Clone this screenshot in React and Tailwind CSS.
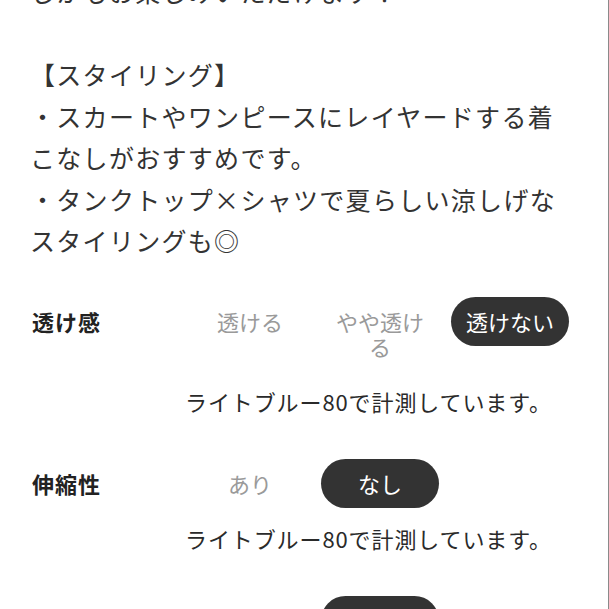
import React from "react";

const FONT = {
  fontFamily: '"Noto Sans CJK JP", "Noto Sans", sans-serif',
};

const bodyLines = [
  "しかもお楽しみいただけます！",
  "",
  "【スタイリング】",
  "・スカートやワンピースにレイヤードする着",
  "こなしがおすすめです。",
  "・タンクトップ×シャツで夏らしい涼しげな",
  "スタイリングも◎",
];

const specs = [
  {
    label: "透け感",
    options: ["透ける", "やや透ける", "透けない"],
    selected: 2,
    note: "ライトブルー80で計測しています。",
  },
  {
    label: "伸縮性",
    options: ["あり", "なし"],
    selected: 1,
    note: "ライトブルー80で計測しています。",
  },
  {
    label: "生地の厚さ",
    options: ["薄手", "普通", "厚手"],
    selected: 1,
    note: "ライトブルー80で計測しています。",
  },
];

function SpecRow({ spec }) {
  return (
    <div className="flex flex-col">
      <div className="flex items-start">
        <div className="w-[155px] shrink-0 pl-[2px] py-3 text-[22px] leading-[25px] font-bold tracking-[1px] text-[#222]">
          {spec.label}
        </div>
        <div className="flex">
          {spec.options.map((opt, i) => (
            <div key={opt} className="w-[130px] flex justify-center">
              {i === spec.selected ? (
                <div className="w-[118px] h-[49px] rounded-full bg-[#333333] flex items-center justify-center whitespace-nowrap text-[22px] leading-[25px] text-white">
                  {opt}
                </div>
              ) : (
                <div className="w-[118px] px-3 py-3 text-center text-[22px] leading-[25px] text-[#9a9a9a]">
                  {opt}
                </div>
              )}
            </div>
          ))}
        </div>
      </div>
      <div className="mt-[18px] pl-[155px] text-[22px] leading-[25px] tracking-[0.9px] text-[#2a2a2a] whitespace-nowrap">
        {spec.note}
      </div>
    </div>
  );
}

export default function App() {
  return (
    <div
      className="w-[609px] h-[609px] overflow-hidden bg-white border-r border-[#8a8a8a]"
      style={FONT}
    >
      <div className="pl-[30px] pr-[10px] mt-[-29px] text-[25px] leading-[41.5px] tracking-[1.3px] text-[#333]">
        {bodyLines.map((line, i) => (
          <div key={i} className="whitespace-nowrap h-[41.5px]">
            {line}
          </div>
        ))}
      </div>
      <div className="pl-[30px] mt-[35px] flex flex-col gap-[45px]">
        {specs.map((s) => (
          <SpecRow key={s.label} spec={s} />
        ))}
      </div>
    </div>
  );
}
